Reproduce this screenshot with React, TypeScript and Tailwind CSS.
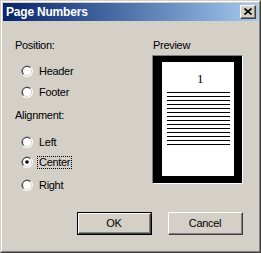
import React from "react";

function Radio({ checked }: { checked?: boolean }) {
  return (
    <svg width="12" height="12" viewBox="0 0 12 12" className="shrink-0">
      <circle cx="6" cy="6" r="6" fill="#ffffff" />
      <path d="M1.76 10.24 A6 6 0 0 1 10.24 1.76 Z" fill="#808080" />
      <circle cx="6" cy="6" r="5" fill="#d4d0c8" />
      <path d="M2.46 9.54 A5 5 0 0 1 9.54 2.46 Z" fill="#404040" />
      <circle cx="6" cy="6" r="4" fill="#ffffff" />
      {checked && <circle cx="6" cy="6" r="1.8" fill="#000000" />}
    </svg>
  );
}

function RadioRow({
  label,
  checked,
  focused,
  className,
}: {
  label: string;
  checked?: boolean;
  focused?: boolean;
  className?: string;
}) {
  return (
    <div className={"flex h-[20px] items-center pl-[6px] " + (className ?? "")}>
      <Radio checked={checked} />
      <span
        className={
          "ml-[4px] leading-[11px] " +
          (focused ? "border border-dotted border-black px-[1px] py-[0px]" : "px-[2px]")
        }
      >
        {label}
      </span>
    </div>
  );
}

function Button({ label, isDefault }: { label: string; isDefault?: boolean }) {
  const inner = (
    <div className="h-full w-full border-t border-l border-t-white border-l-white border-b border-r border-b-[#404040] border-r-[#404040]">
      <div className="flex h-full w-full items-center justify-center border-b border-r border-b-[#808080] border-r-[#808080]">
        {label}
      </div>
    </div>
  );
  if (isDefault) {
    return <div className="h-[23px] w-[75px] border border-black">{inner}</div>;
  }
  return <div className="h-[23px] w-[75px]">{inner}</div>;
}

export default function App() {
  const lines = Array.from({ length: 14 });
  return (
    <div
      className="h-[253px] w-[261px] border-t border-l border-t-[#d4d0c8] border-l-[#d4d0c8] border-b border-r border-b-[#404040] border-r-[#404040] bg-[#d4d0c8] text-[11px] tracking-[-0.3px] text-black"
      style={{ fontFamily: '"Liberation Sans", Arial, sans-serif' }}
    >
      <div className="h-full w-full border-t border-l border-t-white border-l-white border-b border-r border-b-[#808080] border-r-[#808080] p-[1px]">
        <div className="flex h-[18px] items-center justify-between bg-gradient-to-r from-[#0a246a] to-[#a6caf0] pl-[3px] pr-[2px]">
          <span className="text-[12px] font-bold tracking-[-0.2px] text-white">Page Numbers</span>
          <div className="h-[14px] w-[16px] border-t border-l border-t-white border-l-white border-b border-r border-b-[#404040] border-r-[#404040] bg-[#d4d0c8]">
            <div className="flex h-full w-full items-center justify-center border-b border-r border-b-[#808080] border-r-[#808080]">
              <svg width="8" height="7" viewBox="0 0 8 7">
                <path d="M0.5 0.5 L7.5 6.5 M7.5 0.5 L0.5 6.5" stroke="#000" strokeWidth="1.7" />
              </svg>
            </div>
          </div>
        </div>

        <div className="flex pt-[17px]">
          <div className="ml-[12px] w-[137px]">
            <div className="flex h-[14px] items-center">Position:</div>
            <RadioRow label="Header" className="mt-[9px]" />
            <RadioRow label="Footer" className="mt-[1px]" />
            <div className="mt-[6px] flex h-[14px] items-center">Alignment:</div>
            <RadioRow label="Left" className="mt-[10px]" />
            <RadioRow label="Center" checked focused />
            <RadioRow label="Right" className="mt-[3px]" />
          </div>
          <div className="w-[91px]">
            <div className="flex h-[14px] items-center pl-[1px]">Preview</div>
            <div className="mt-[3px] h-[129px] w-[91px] border-t border-l border-t-[#808080] border-l-[#808080] border-b border-r border-b-white border-r-white bg-black pt-[6px] pl-[9px]">
              <div className="h-[114px] w-[72px] bg-white">
                <div
                  className="flex h-[30px] justify-center pl-[4px] pt-[10px] text-[13px] leading-[13px]"
                  style={{ fontFamily: '"Liberation Serif", "Times New Roman", serif' }}
                >
                  1
                </div>
                <div className="flex flex-col gap-[3px] pl-[5px] pr-[4px]">
                  {lines.map((_, i) => (
                    <div key={i} className="h-[1px] w-full bg-black" />
                  ))}
                </div>
              </div>
            </div>
          </div>
        </div>

        <div className="mt-[17px] flex justify-end gap-[16px] pr-[15px]">
          <Button label="OK" isDefault />
          <Button label="Cancel" />
        </div>
      </div>
    </div>
  );
}
